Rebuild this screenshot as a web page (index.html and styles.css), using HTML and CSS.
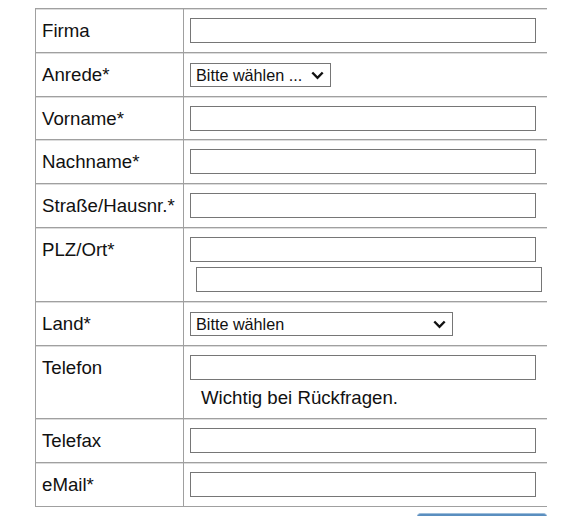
FILE: index.html
```html
<!DOCTYPE html>
<html lang="de">
<head>
<meta charset="utf-8">
<title>Adresse</title>
<link rel="stylesheet" href="styles.css">
</head>
<body>
<div class="page">
  <div class="form">
    <div class="label">Firma</div>
    <div class="value"><input class="text" type="text"></div>

    <div class="label">Anrede*</div>
    <div class="value">
      <div class="select-wrap sel-short">
        <select class="sel">
          <option>Bitte wählen ...</option>
          <option>Herr</option>
          <option>Frau</option>
        </select>
        <svg class="chev" width="13" height="9" viewBox="0 0 13 9" aria-hidden="true"><path d="M1.3 1.5 L6.5 6.8 L11.7 1.5" fill="none" stroke="#111" stroke-width="2.4"/></svg>
      </div>
    </div>

    <div class="label">Vorname*</div>
    <div class="value"><input class="text" type="text"></div>

    <div class="label">Nachname*</div>
    <div class="value"><input class="text" type="text"></div>

    <div class="label">Straße/Hausnr.*</div>
    <div class="value"><input class="text" type="text"></div>

    <div class="label">PLZ/Ort*</div>
    <div class="value">
      <input class="text" type="text">
      <input class="text text-second" type="text">
    </div>

    <div class="label">Land*</div>
    <div class="value">
      <div class="select-wrap sel-long">
        <select class="sel">
          <option>Bitte wählen</option>
          <option>Deutschland</option>
          <option>Österreich</option>
          <option>Schweiz</option>
        </select>
        <svg class="chev" width="13" height="9" viewBox="0 0 13 9" aria-hidden="true"><path d="M1.3 1.5 L6.5 6.8 L11.7 1.5" fill="none" stroke="#111" stroke-width="2.4"/></svg>
      </div>
    </div>

    <div class="label">Telefon</div>
    <div class="value">
      <input class="text" type="text">
      <div class="hint">Wichtig bei Rückfragen.</div>
    </div>

    <div class="label">Telefax</div>
    <div class="value"><input class="text" type="text"></div>

    <div class="label last">eMail*</div>
    <div class="value last"><input class="text" type="text"></div>
  </div>
  <div class="actions">
    <button class="btn" type="button">Weiter</button>
  </div>
</div>
</body>
</html>
```

FILE: styles.css
```css
html, body {
  margin: 0;
  padding: 0;
  background: #ffffff;
}

body {
  font-family: "Liberation Sans", Arial, sans-serif;
  color: #111111;
}

.page {
  padding: 8px 0 0 35px;
}

.form {
  display: grid;
  grid-template-columns: 149px 363px;
  width: 512px;
}

.label,
.value {
  border-top: 1px solid #a0a0a0;
  box-shadow: inset 0 1px 0 #dcdcdc;
  padding: 9px 6px 8.8px 6px;
  box-sizing: border-box;
}

.label {
  border-left: 1px solid #a0a0a0;
  border-right: 1px solid #a0a0a0;
  font-size: 18.67px;
  line-height: 25px;
}

.last {
  border-bottom: 1px solid #a0a0a0;
}

.text {
  display: block;
  box-sizing: border-box;
  width: 346px;
  height: 25px;
  margin: 0;
  padding: 0 4px;
  border: 1px solid #767676;
  border-radius: 0;
  background: #ffffff;
  font-family: "Liberation Sans", Arial, sans-serif;
  font-size: 16px;
}

.text-second {
  margin-top: 5px;
  margin-left: 6px;
}

.select-wrap {
  position: relative;
  height: 24px;
  margin-top: 1px;
}

.sel-short {
  width: 141px;
}

.sel-long {
  width: 263px;
}

.sel {
  display: block;
  box-sizing: border-box;
  width: 100%;
  height: 24px;
  margin: 0;
  padding: 0 20px 0 5px;
  border: 1px solid #767676;
  border-radius: 0;
  background: #ffffff;
  color: #111111;
  font-family: "Liberation Sans", Arial, sans-serif;
  font-size: 16.2px;
  line-height: 22px;
  -webkit-appearance: none;
  appearance: none;
}

.chev {
  position: absolute;
  right: 7px;
  top: 8px;
  pointer-events: none;
}

.hint {
  margin-top: 5px;
  padding-left: 11px;
  font-size: 18.67px;
  line-height: 25px;
}

.actions {
  display: flex;
  justify-content: flex-end;
  width: 512px;
  margin-top: 6px;
}

.btn {
  width: 130px;
  height: 60px;
  padding: 28px 0 0 0;
  border: none;
  border-top: 1px solid #9cbddb;
  border-radius: 4px 4px 0 0;
  background: #5a8ebf;
  color: #ffffff;
  font-family: "Liberation Sans", Arial, sans-serif;
  font-size: 16px;
}
```
